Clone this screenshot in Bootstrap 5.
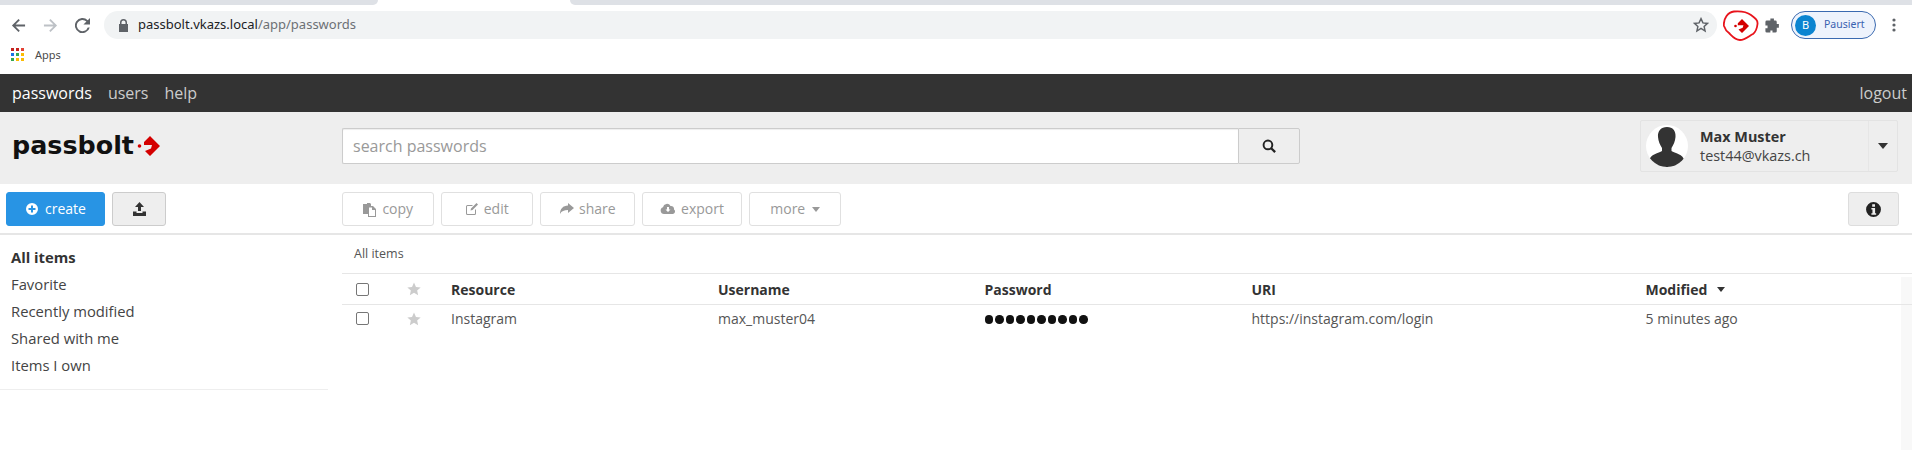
<!doctype html>
<html lang="en"><head><meta charset="utf-8">
<link href="https://cdn.jsdelivr.net/npm/bootstrap@5.3.0/dist/css/bootstrap.min.css" rel="stylesheet">
<style>
html,body{height:450px;overflow:hidden;background:#fff}
body{font-family:"Open Sans",sans-serif;color:#333;font-size:14px}
.tabstrip{height:5px;background:#fff}
.tabstrip i{display:block;height:5px}
.tab-a{width:378px;background:#dee1e6;border-bottom-right-radius:8px}
.tab-b{flex:1;background:#dee1e6;border-bottom-left-radius:8px;margin-left:192px}
.chrome{height:40px;padding:4px 0}
.nbtn{display:flex;justify-content:center}
.nb1,.nb3{width:36px}
.nb2{width:28px}
.omni{width:1613px;height:28px;border-radius:14px;background:#f1f3f4;margin-left:4px;font-family:"Noto Sans",sans-serif;font-size:13px;color:#202124;padding:0 8px 0 14px}
.omni span{color:#6c7074}
.lock{margin-right:9px}
.ext{margin-left:6px}
.puzzle{margin-left:5px}
.prof{width:85px;height:28px;border:1px solid #3b6ab0;border-radius:14px;background:#eef3fc;color:#3a62b0;font-family:"Noto Sans",sans-serif;font-size:10.5px;padding-left:3px;gap:8px;margin-left:10px}
.prof b{width:21px;height:21px;border-radius:50%;background:#0b84d0;color:#fff;font-weight:400;font-size:11px;display:flex;align-items:center;justify-content:center}
.kebab{margin-left:16px}
.bm{height:29px;padding:0 0 9px 11px;font-family:"Noto Sans",sans-serif;font-size:11px;color:#4a4a4a;gap:10px}
.topnav{height:38px;background:#333;padding:0 5px 0 12px;font-size:16px;color:#ccc}
.topnav .on{color:#fff}
.topnav a{color:inherit;text-decoration:none}
.topnav .nx{margin-left:16px}
.hdr{height:72px;background:#eee;padding-bottom:5px}
.logo-area{width:342px;padding-left:12px;gap:3px}
.logo-txt{font-family:"DejaVu Sans",sans-serif;font-weight:700;font-size:25.4px;color:#111;line-height:1}
.searchbox{width:896px;height:36px;background:#fff;border:1px solid #ccc;border-right:0;font-size:16px;color:#999;padding:0 10px;border-radius:2px 0 0 2px;box-shadow:inset 0 1px 1px #eee}
.searchbtn{width:62px;height:36px;background:#eee;border:1px solid #ccc;border-radius:0 2px 2px 0}
.user{width:258px;height:52px;margin-left:340px;border:1px solid #e3e3e3;border-radius:2px;padding-left:5px}
.user .nm{font-weight:700;font-size:14.4px;line-height:19px;color:#333}
.user .ml{font-size:14.4px;line-height:19px;color:#444}
.avatar{width:42px;height:42px;border-radius:50%;background:#fff;overflow:hidden;margin-right:12px}
.caretbox{width:29px;height:100%;border-left:1px solid #e6e6e6;margin-left:auto}
.tools{height:51px;border-bottom:2px solid #e6e6e6;padding:1px 13px 0 6px}
.pb{height:34px;border:1px solid #e0e0e0;border-radius:3px;background:#fff;color:#999;font-size:14px;gap:5px;padding:0;line-height:1}
.pb svg{fill:#999}
.left-tools{width:336px;gap:7px}
.create{width:99px;background:#2894e4;border-color:#2894e4;color:#fff;gap:6px}
.imp{width:54px;background:#eee;border-color:#ccc}
.gapb{gap:7.2px}
.w-copy{width:91.500px}.w-edit{width:92px}.w-share{width:95px}.w-export{width:100px}.w-more{width:92px;gap:7px}
.info{width:51px;background:#eee;border-color:#ddd}
.bodyrow{height:215px}
.sidebar{width:328px;flex:none}
.sidelist{border-bottom:1px solid #eee;padding:9px 0 10px 11px}
.sidelist div{height:27px;line-height:27px;font-size:14.800px;color:#444}
.sidelist .act{font-weight:700;color:#333}
.mainpane{flex:1;margin-left:14px;min-width:0;background:linear-gradient(#f8f8f8,#f8f8f8) no-repeat right 0 top 42px/11px 100%}
.crumb{height:39px;padding:5px 0 0 12px;font-size:12.5px;line-height:28px;color:#555;border-bottom:1px solid #e6e6e6}
.grow{display:grid;grid-template-columns:54px 55px 267px 266.500px 267px 394px 1fr;align-items:center;font-size:14px;color:#555}
.ghead{border-bottom:1px solid #e6e6e6;font-weight:700;color:#333;height:31px}
.gbody{height:30px;padding-bottom:3px}
.cbx{width:13px;height:13px;border:1px solid #767676;border-radius:2px;background:#fff;margin-left:14px;display:block}
.st{margin-left:11px}
.sortc{margin-left:10px}
.dots{line-height:1}
.dots i{display:inline-block;width:8.500px;height:8.500px;border-radius:50%;background:#111;margin-right:2px}
</style></head><body>
<div class="tabstrip d-flex"><i class="tab-a"></i><i class="tab-b"></i></div>
<div class="chrome d-flex align-items-center">
 <div class="nbtn nb1"><svg width="15" height="15" viewBox="0 0 16 16"><path d="M15 7H4.800l4.600-4.600L8 1 1 8l7 7 1.400-1.400L4.800 9H15z" fill="#5f6368"/></svg></div>
 <div class="nbtn nb2"><svg width="15" height="15" viewBox="0 0 16 16"><path d="M1 7h10.200L6.600 2.400 8 1l7 7-7 7-1.400-1.400L11.200 9H1z" fill="#bdc1c6"/></svg></div>
 <div class="nbtn nb3"><svg width="15" height="15" viewBox="0 0 16 16"><path d="M13.600 2.400A8 8 0 1 0 15.700 10h-2.100a6 6 0 1 1-1.400-6.200L9 7h7V0z" fill="#5f6368"/></svg></div>
 <div class="omni d-flex align-items-center"><svg class="lock" width="11" height="13" viewBox="0 0 11 13"><path d="M2 5V3.500a3.500 3.500 0 0 1 7 0V5h1v8H1V5zm1.500 0h4V3.500a2 2 0 0 0-4 0z" fill="#5f6368"/></svg><div>passbolt.vkazs.local<span>/app/passwords</span></div>
  <svg class="ms-auto" width="16" height="16" viewBox="0 0 24 24"><path d="M12 2.500l2.900 6.300 6.900.8-5.100 4.700 1.400 6.800L12 17.200l-6.100 3.900 1.400-6.800-5.100-4.700 6.900-.8z" fill="none" stroke="#5f6368" stroke-width="2.200"/></svg></div>
 <svg class="ext" width="36" height="31" viewBox="0 0 36 31"><path d="M1 16C0 9 5 2 11 1.500 17 1 24 2 28 5c4 3 7 5 6.500 9-.5 5-2 8-4.500 10-4 2-8 6-13 6-5 0-8-4-11-7-3-2-4-4-5-7z" fill="none" stroke="#e8141c" stroke-width="1.800"/><g fill="#d40000"><circle cx="12.500" cy="16" r="1.300"/><polygon points="19,9 26,16 19,23 15.500,19.500 19.700,17.800 20.400,15.300 14.800,15.300 14.800,13.200"/></g></svg>
 <svg class="puzzle" width="17" height="17" viewBox="0 0 24 24"><path d="M9 2h5v3h2a2 2 0 0 1 2 2v3h3v5h-3v5a2 2 0 0 1-2 2h-4v-3H9v3H4a2 2 0 0 1-2-2v-4h3v-4H2V7a2 2 0 0 1 2-2h5z" fill="#5f6368"/></svg>
 <div class="prof d-flex align-items-center"><b>B</b>Pausiert</div>
 <svg class="kebab" width="4" height="14" viewBox="0 0 4 14"><circle cx="2" cy="2" r="1.600" fill="#5f6368"/><circle cx="2" cy="7" r="1.600" fill="#5f6368"/><circle cx="2" cy="12" r="1.600" fill="#5f6368"/></svg>
</div>
<div class="bm d-flex align-items-center"><svg width="14" height="14" viewBox="0 0 14 14"><g><rect width="3" height="3" fill="#c5221f"/><rect x="5" width="3" height="3" fill="#c5221f"/><rect x="10" width="3" height="3" fill="#e34133"/><rect y="5" width="3" height="3" fill="#1a73e8"/><rect x="5" y="5" width="3" height="3" fill="#34a853"/><rect x="10" y="5" width="3" height="3" fill="#fbbc04"/><rect y="10" width="3" height="3" fill="#34a853"/><rect x="5" y="10" width="3" height="3" fill="#fbbc04"/><rect x="10" y="10" width="3" height="3" fill="#fbbc04"/></g></svg>Apps</div>
<nav class="topnav d-flex align-items-center"><a class="on">passwords</a><a class="nx">users</a><a class="nx">help</a><a class="ms-auto">logout</a></nav>
<header class="hdr d-flex align-items-center">
 <div class="logo-area d-flex align-items-center"><span class="logo-txt">passbolt</span><svg width="24" height="22" viewBox="0 0 24 22"><g fill="#d40000"><circle cx="2.500" cy="11" r="1.800"/><polygon points="13,1 23,11 13,21 8,16 14,13.500 15,10 7,10 7,7"/></g></svg></div>
 <div class="searchbox d-flex align-items-center">search passwords</div>
 <div class="searchbtn d-flex align-items-center justify-content-center"><svg width="14" height="14" viewBox="0 0 16 16"><circle cx="6.800" cy="6.800" r="5" fill="none" stroke="#222" stroke-width="2.200"/><path d="M10.500 10.500L15 15" stroke="#222" stroke-width="2.600"/></svg></div>
 <div class="user d-flex align-items-center"><div class="avatar"><svg width="42" height="42" viewBox="0 0 42 42"><path d="M21 2c6 0 9 4 8.500 10-.3 4-2 8-4 11v3c3 2 12 3 13 10 0 3-6 6-17.500 6S3 39 3 36c1-7 10-8 13-10v-3c-2-3-3.700-7-4-11C11.500 6 15 2 21 2z" fill="#333"/></svg></div><div><div class="nm">Max Muster</div><div class="ml">test44@vkazs.ch</div></div><div class="caretbox d-flex align-items-center justify-content-center"><svg width="10" height="6" viewBox="0 0 10 6"><path d="M0 0h10L5 6z" fill="#333"/></svg></div></div>
</header>
<div class="tools d-flex align-items-center">
 <div class="left-tools d-flex">
  <button class="pb create btn d-flex align-items-center justify-content-center"><svg width="14" height="14" viewBox="0 0 14 14"><path d="M7 1a6 6 0 1 0 0 12A6 6 0 0 0 7 1zm3.500 7H8v2.500H6V8H3.500V6H6V3.500h2V6h2.500z" fill="#fff"/></svg>create</button>
  <button class="pb imp btn d-flex align-items-center justify-content-center"><svg width="15" height="14" viewBox="0 0 15 14"><path d="M7.500 0L12 5H9v4H6V5H3zM1 9.500h3.500V11h6V9.500H14V14H1z" fill="#333"/></svg></button>
 </div>
 <div class="d-flex gapb">
  <button class="pb btn w-copy d-flex align-items-center justify-content-center"><svg width="15" height="15" viewBox="0 0 15 15"><path d="M1 2h4V1h3l1 1v2h2l3 3v8H6v-3H1z"/><path d="M7 5.500V14h6V8H10V5.500z" fill="#fff"/></svg>copy</button>
  <button class="pb btn w-edit d-flex align-items-center justify-content-center"><svg width="14" height="14" viewBox="0 0 14 14"><path d="M2.500 3H8L7 4H2.500A.5.500 0 0 0 2 4.500v7c0 .3.200.5.500.5h7c.3 0 .5-.2.500-.5V8l1-1v4.500A1.500 1.500 0 0 1 9.500 13h-7A1.500 1.500 0 0 1 1 11.500v-7A1.500 1.500 0 0 1 2.500 3zM11.500 1L13 2.500 7.500 8 5.500 8.500 6 6.500z"/></svg>edit</button>
  <button class="pb btn w-share d-flex align-items-center justify-content-center"><svg width="15" height="14" viewBox="0 0 15 14"><path d="M9 1l6 5-6 5V8C5 8 2.500 9 1 12c0-5 3-8.500 8-8.500z"/></svg>share</button>
  <button class="pb btn w-export d-flex align-items-center justify-content-center"><svg width="16" height="14" viewBox="0 0 16 14"><path d="M4 12a3.500 3.500 0 0 1-1-6.800A4 4 0 0 1 10.500 4 3 3 0 0 1 14 7.500 2.500 2.500 0 0 1 13 12z"/><path d="M7 5h2v2.500h1.500L8 10 5.500 7.500H7z" fill="#fff"/></svg>export</button>
  <button class="pb btn w-more d-flex align-items-center justify-content-center">more <svg width="8" height="5" viewBox="0 0 10 6"><path d="M0 0h10L5 6z"/></svg></button>
 </div>
 <button class="pb info btn d-flex align-items-center justify-content-center ms-auto"><svg width="15" height="17" viewBox="0 0 14 16"><path d="M7 1a7 7 0 1 0 0 14A7 7 0 0 0 7 1zM5.800 3h2.600v2.300H5.800zM5 6.500h3.500v5h1V13H5v-1.500h1V8H5z" fill="#222" fill-rule="evenodd"/></svg></button>
</div>
<div class="d-flex bodyrow">
 <aside class="sidebar"><div class="sidelist"><div class="act">All items</div><div>Favorite</div><div>Recently modified</div><div>Shared with me</div><div>Items I own</div></div></aside>
 <main class="mainpane">
  <div class="crumb">All items</div>
  <div class="grow ghead"><label><span class="cbx"></span></label><svg class="st" width="14" height="14" viewBox="0 0 24 24"><path d="M12 1l3.400 7.400 8 .9-6 5.400 1.700 8L12 18.600l-7.100 4.100 1.700-8-6-5.400 8-.9z" fill="#ccc"/></svg><div>Resource</div><div>Username</div><div>Password</div><div>URI</div><div class="d-flex align-items-center">Modified<svg class="sortc" width="8" height="5" viewBox="0 0 10 6"><path d="M0 0h10L5 6z" fill="#333"/></svg></div></div>
  <div class="grow gbody"><label><span class="cbx"></span></label><svg class="st" width="14" height="14" viewBox="0 0 24 24"><path d="M12 1l3.400 7.400 8 .9-6 5.400 1.700 8L12 18.600l-7.100 4.100 1.700-8-6-5.400 8-.9z" fill="#ccc"/></svg><div>Instagram</div><div>max_muster04</div><div class="dots"><i></i><i></i><i></i><i></i><i></i><i></i><i></i><i></i><i></i><i></i></div><div>https://instagram.com/login</div><div>5 minutes ago</div></div>
 </main>
</div>
<script src="https://cdn.jsdelivr.net/npm/bootstrap@5.3.0/dist/js/bootstrap.bundle.min.js"></script>
</body></html>
